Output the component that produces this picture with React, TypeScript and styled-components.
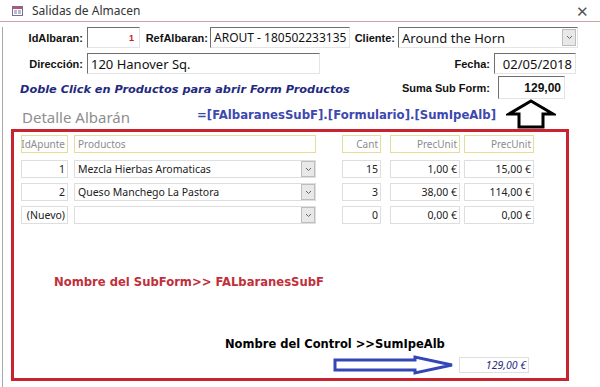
import React from "react";
import styled, { createGlobalStyle } from "styled-components";

const GlobalStyle = createGlobalStyle`
    html, body {
        margin: 0;
        padding: 0;
        background: #fff;
    }
    body {
        font-family: "Noto Sans", "Liberation Sans", sans-serif;
    }
`;

const Window = styled.div`
    width: 600px;
    height: 387px;
    background: #fff;
    overflow: hidden;
`;
const TitleBar = styled.div`
    display: flex;
    align-items: center;
    height: 22px;
    padding: 0 0 0 12px;
    border-bottom: 1px solid #c9a3a8;
    box-sizing: border-box;
    font-size: 12px;
    color: #333;
`;
const TitleText = styled.div`
    margin-left: 9px;
    flex: 1;
`;
const CloseBtn = styled.div`
    width: 36px;
    text-align: center;
    font-size: 15px;
    color: #555;
`;
const Body = styled.div`
    margin-left: 2px;
    height: 365px;
    border-left: 1px solid #a8a8a8;
    box-sizing: border-box;
`;
const FieldRow = styled.div<{ $mt: number; $h?: number }>`
    display: flex;
    align-items: center;
    margin-top: ${p => p.$mt}px;
    height: ${p => p.$h || 21}px;
`;
const Label = styled.div<{ $w: number; $mr?: number }>`
    width: ${p => p.$w}px;
    margin-right: ${p => (p.$mr === undefined ? 4 : p.$mr)}px;
    text-align: right;
    font-family: "Liberation Sans", sans-serif;
    font-weight: bold;
    font-size: 11px;
    color: #111;
    white-space: nowrap;
`;
const Input = styled.div<{ $w: number; $h?: number; $align?: string; $fs?: number }>`
    display: flex;
    align-items: center;
    justify-content: ${p => (p.$align === "right" ? "flex-end" : "flex-start")};
    width: ${p => p.$w}px;
    height: ${p => p.$h || 21}px;
    padding: 0 3px;
    box-sizing: border-box;
    border-top: 1px solid #6f6f6f;
    border-left: 1px solid #6f6f6f;
    border-right: 1px solid #e4e4e4;
    border-bottom: 1px solid #e4e4e4;
    font-size: ${p => p.$fs || 13}px;
    color: #111;
    white-space: nowrap;
    overflow: hidden;
`;
const RedNum = styled.span`
    color: #c0202a;
    font-weight: bold;
    font-size: 9px;
    font-family: "Liberation Sans", sans-serif;
    margin-right: 2px;
`;
const ComboBox = styled(Input)`
    padding-right: 1px;
    justify-content: space-between;
`;
const DropBtn = styled.div<{ $w?: number; $h?: number }>`
    display: flex;
    align-items: center;
    justify-content: center;
    width: ${p => p.$w || 13}px;
    height: ${p => p.$h || 16}px;
    background: #e8e8e8;
    border: 1px solid #bdbdbd;
    box-sizing: border-box;
    flex-shrink: 0;
`;
const SumValue = styled.span`
    font-family: "Liberation Sans", sans-serif;
    font-weight: bold;
    font-size: 12px;
`;
const Hint = styled.div`
    margin-left: 17px;
    width: 381px;
    font-family: "DejaVu Sans", sans-serif;
    font-weight: bold;
    font-style: italic;
    font-size: 11.3px;
    color: #1f2a80;
    white-space: nowrap;
    padding-top: 3px;
`;
const SectionTitle = styled.div`
    margin-left: 19px;
    width: 175px;
    font-size: 15px;
    color: #8e8e8e;
    padding-top: 6px;
`;
const Formula = styled.div`
    width: 305px;
    font-family: "DejaVu Sans", sans-serif;
    font-weight: bold;
    font-size: 11.7px;
    color: #3d48b0;
    white-space: nowrap;
    padding-top: 1px;
`;
const SubFormFrame = styled.div`
    margin-left: 8px;
    width: 558px;
    height: 252px;
    border: 3px solid #c8232e;
    box-sizing: border-box;
    padding: 3px 0 0 7px;
    display: flex;
    flex-direction: column;
`;
const GridRow = styled.div<{ $mt?: number }>`
    display: flex;
    height: 18px;
    margin-top: ${p => p.$mt || 0}px;
`;
const Cell = styled.div<{ $w: number; $ml?: number; $head?: boolean; $align?: string; $italic?: boolean }>`
    display: flex;
    align-items: center;
    justify-content: ${p => (p.$align === "left" ? "space-between" : "flex-end")};
    width: ${p => p.$w}px;
    margin-left: ${p => p.$ml || 0}px;
    padding: 0 2px 0 3px;
    box-sizing: border-box;
    border: 1px solid ${p => (p.$head ? "#e6dc9a" : "#dedede")};
    background: #fff;
    font-size: ${p => (p.$head ? 10 : 10.5)}px;
    font-style: ${p => (p.$italic ? "italic" : "normal")};
    color: ${p => (p.$head ? "#8c8c8c" : p.$italic ? "#1f2a80" : "#222")};
    white-space: nowrap;
    overflow: hidden;
`;
const ComboCell = styled(Cell)`
    padding-right: 0;
`;
const Note = styled.div<{ $ml: number; $mt: number; $color: string; $fs: number }>`
    margin-left: ${p => p.$ml}px;
    margin-top: ${p => p.$mt}px;
    font-family: "DejaVu Sans", sans-serif;
    font-weight: bold;
    font-size: ${p => p.$fs}px;
    line-height: 16px;
    color: ${p => p.$color};
    white-space: nowrap;
`;
const TotalRow = styled.div`
    display: flex;
    align-items: center;
    margin-top: 4px;
    height: 18px;
`;

function FormIcon() {
    return (
        <svg width="11" height="10" viewBox="0 0 11 10">
            <rect x="0.5" y="0.5" width="10" height="9" fill="#fff" stroke="#7a6d8f" />
            <rect x="1" y="1" width="9" height="2" fill="#c0507a" />
            <rect x="2" y="4.5" width="3" height="1" fill="#6a7aa8" />
            <rect x="6" y="4.5" width="3" height="1" fill="#6a7aa8" />
            <rect x="2" y="6.5" width="3" height="1" fill="#6a7aa8" />
            <rect x="6" y="6.5" width="3" height="1" fill="#6a7aa8" />
        </svg>
    );
}

function Chevron() {
    return (
        <svg width="7" height="5" viewBox="0 0 7 5">
            <path d="M1 1 L3.5 3.5 L6 1" fill="none" stroke="#666" strokeWidth="1" />
        </svg>
    );
}

function UpArrow() {
    return (
        <svg width="50" height="30" viewBox="0 0 50 30" style={{ marginLeft: 4 }}>
            <path
                d="M25 2 L47 15 L37 15 L37 28 L13 28 L13 15 L3 15 Z"
                fill="#fff"
                stroke="#000"
                strokeWidth="3"
            />
        </svg>
    );
}

function RightArrow() {
    return (
        <svg width="122" height="20" viewBox="0 0 122 20" style={{ marginLeft: 312 }}>
            <path
                d="M2 5 L82 5 L82 2 L119 10 L82 18 L82 15 L2 15 Z"
                fill="#fff"
                stroke="#3446b8"
                strokeWidth="3"
            />
        </svg>
    );
}

type Line = { id: string; prod: string; cant: string; prec: string; total: string };

const lines: Line[] = [
    { id: "1", prod: "Mezcla Hierbas Aromaticas", cant: "15", prec: "1,00 €", total: "15,00 €" },
    { id: "2", prod: "Queso Manchego La Pastora", cant: "3", prec: "38,00 €", total: "114,00 €" },
    { id: "(Nuevo)", prod: "", cant: "0", prec: "0,00 €", total: "0,00 €" },
];

export default function App() {
    return (
        <Window>
            <GlobalStyle />
            <TitleBar>
                <FormIcon />
                <TitleText>Salidas de Almacen</TitleText>
                <CloseBtn>✕</CloseBtn>
            </TitleBar>
            <Body>
                <FieldRow $mt={5}>
                    <Label $w={80}>IdAlbaran:</Label>
                    <Input $w={53} $align="right">
                        <RedNum>1</RedNum>
                    </Input>
                    <Label $w={68} $mr={2}>RefAlbaran:</Label>
                    <Input $w={140} $fs={12}>AROUT - 180502233135</Input>
                    <Label $w={45} $mr={3}>Cliente:</Label>
                    <ComboBox $w={180}>
                        <span>Around the Horn</span>
                        <DropBtn $w={14} $h={17}>
                            <Chevron />
                        </DropBtn>
                    </ComboBox>
                </FieldRow>
                <FieldRow $mt={5}>
                    <Label $w={80}>Dirección:</Label>
                    <Input $w={233}>120 Hanover Sq.</Input>
                    <Label $w={170}>Fecha:</Label>
                    <Input $w={82} $align="right">02/05/2018</Input>
                </FieldRow>
                <FieldRow $mt={2} $h={23}>
                    <Hint>Doble Click en Productos para abrir Form Productos</Hint>
                    <Label $w={89} $mr={8}>Suma Sub Form:</Label>
                    <Input $w={67} $h={23} $align="right">
                        <SumValue>129,00</SumValue>
                    </Input>
                </FieldRow>
                <FieldRow $mt={0} $h={30}>
                    <SectionTitle>Detalle Albarán</SectionTitle>
                    <Formula>=[FAlbaranesSubF].[Formulario].[SumIpeAlb]</Formula>
                    <UpArrow />
                </FieldRow>
                <SubFormFrame>
                    <GridRow>
                        <Cell $w={47} $head>IdApunte</Cell>
                        <Cell $w={242} $ml={6} $head $align="left">Productos</Cell>
                        <Cell $w={39} $ml={26} $head>Cant</Cell>
                        <Cell $w={70} $ml={9} $head>PrecUnit</Cell>
                        <Cell $w={70} $ml={4} $head>PrecUnit</Cell>
                    </GridRow>
                    {lines.map((l, i) => (
                        <GridRow key={l.id} $mt={i === 0 ? 7 : 5}>
                            <Cell $w={47}>{l.id}</Cell>
                            <ComboCell $w={242} $ml={6} $align="left">
                                <span>{l.prod}</span>
                                <DropBtn $w={14} $h={16}>
                                    <Chevron />
                                </DropBtn>
                            </ComboCell>
                            <Cell $w={39} $ml={26}>{l.cant}</Cell>
                            <Cell $w={70} $ml={9}>{l.prec}</Cell>
                            <Cell $w={70} $ml={4}>{l.total}</Cell>
                        </GridRow>
                    ))}
                    <Note $ml={33} $mt={50} $color="#c0303a" $fs={11.6}>
                        Nombre del SubForm&gt;&gt; FALbaranesSubF
                    </Note>
                    <Note $ml={204} $mt={46} $color="#000" $fs={11.5}>
                        Nombre del Control &gt;&gt;SumIpeAlb
                    </Note>
                    <TotalRow>
                        <RightArrow />
                        <Cell $w={70} $ml={4} $italic>129,00 €</Cell>
                    </TotalRow>
                </SubFormFrame>
            </Body>
        </Window>
    );
}
